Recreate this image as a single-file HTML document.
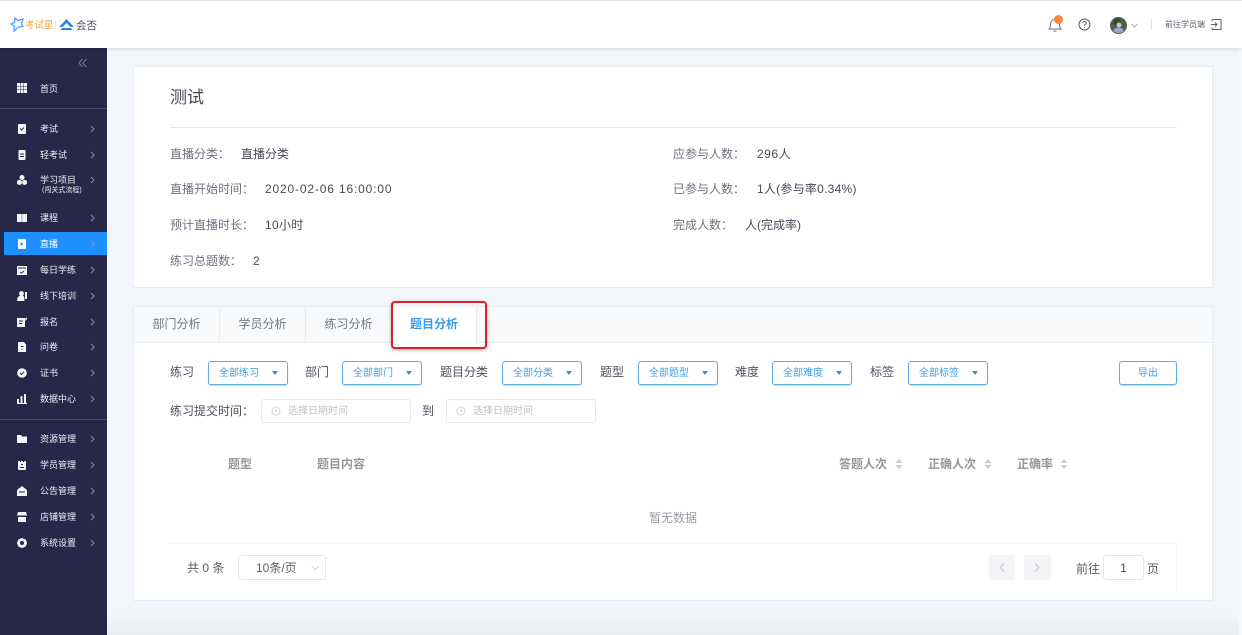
<!DOCTYPE html>
<html lang="zh"><head><meta charset="utf-8"><title>题目分析</title>
<style>
*{box-sizing:border-box;margin:0;padding:0}
html,body{width:1242px;height:635px;overflow:hidden;background:#f2f5f9}
html{background:#f2f5f9}
body{position:relative;font-family:"Liberation Sans","Noto Sans CJK SC",sans-serif;font-size:12px;color:#5d6170;filter:blur(.35px)}
.a{position:absolute;white-space:nowrap;line-height:16px}
#bg{position:absolute;left:107px;top:600px;width:1135px;height:35px;background:linear-gradient(#f2f5f9,#f2f5f9 40%,#eceef1)}
#rs{position:absolute;left:1239px;top:48px;width:3px;height:587px;background:#f7f8fa}
#top{position:absolute;left:0;top:1px;width:1242px;height:47px;background:#fff;box-shadow:0 1px 4px rgba(0,0,0,.12)}
#strip{position:absolute;left:0;top:0;width:1242px;height:1px;background:#e6e6e6}
#side{position:absolute;left:0;top:48px;width:107px;height:587px;background:#27274a}
.m{position:absolute;left:40px;font-size:9px;line-height:12px;color:#eeeef5;white-space:nowrap}
.ic{position:absolute;left:17px;width:10px;height:10px}
.ch{position:absolute;left:90px;width:5px;height:8px}
.d{position:absolute;left:0;width:107px;height:1px;background:#44446a}
.card{position:absolute;background:#fff;border:1px solid #e6ebf0}
.l{color:#6f7380}.v{color:#474b58}
.sel{position:absolute;top:361px;height:24px;width:80px;border:1px solid #5eaee6;border-radius:3px;background:#fff;color:#3f9eea;font-size:10px;line-height:24px;padding-left:10px;box-shadow:0 1px 1px rgba(60,120,170,.25)}
.sel i{position:absolute;right:9px;top:9px;width:0;height:0;border:3.500px solid transparent;border-top:4px solid #2a8fdc;border-bottom:0}
.f{font-size:12px;color:#4e5162}
.dt{position:absolute;top:399px;width:150px;height:24px;border:1px solid #e6e8ec;border-radius:3px;background:#fff;color:#bcbfc7;font-size:10px;line-height:24px;padding-left:26px}
.dt svg{position:absolute;left:9px;top:6px}
.th{font-size:12px;color:#94979f;font-weight:bold}
.sort{position:absolute;width:8px;height:10px}
.tab{position:absolute;top:307px;height:36px;border-right:1px solid #e6ebf0;color:#747782;line-height:35px;text-align:center}
</style></head><body>
<div id="bg"></div><div id="rs"></div>
<div id="strip"></div>
<div id="side">
<svg style="position:absolute;left:78px;top:10px" width="9" height="10" viewBox="0 0 9 10" fill="none" stroke="#77779a"><path d="M4.500 1L.8 5l3.700 4M8.500 1L4.800 5l3.700 4"/></svg>
<div class="d" style="top:60px"></div>
<div class="d" style="top:371px"></div>
<div style="position:absolute;left:4px;top:184px;width:103px;height:23px;background:#1e90ff"></div>
</div>

<div id="top"></div>
<svg class="a" style="left:10px;top:17px" width="14" height="15" viewBox="0 0 14 15" fill="none" stroke="#4da3f5" stroke-width="1.300"><path d="M5 1l3 2.500L13 2l-1.500 5L13 9.500 8.500 10 4 14l.5-4.500L1 7l3.500-1.500z"/></svg>
<div class="a" style="left:25px;top:18px;font-size:9.500px;color:#f5a54a">考试星</div>
<div class="a" style="left:55px;top:20px;width:1px;height:11px;background:#ececec"></div>
<svg class="a" style="left:59px;top:19px" width="15" height="12" viewBox="0 0 15 12"><path d="M7.500 0L15 8H11.500L7.500 4 3.500 8H0z" fill="#2a8ae6"/><path d="M3 9h9l1.500 2H1.500z" fill="#2a8ae6"/></svg>
<div class="a" style="left:76px;top:18px;font-size:10.500px;color:#444a58">会否</div>

<svg class="a" style="left:1047px;top:16px" width="16" height="17" viewBox="0 0 16 17" fill="none" stroke="#6a6e78"><path d="M2 13c1.500-1 1.500-3 1.500-5a4.500 4.500 0 0 1 9 0c0 2 0 4 1.500 5z"/><path d="M6.500 15h3"/></svg>
<div class="a" style="left:1054px;top:15px;width:9px;height:9px;border-radius:50%;background:#f58a3c"></div>
<svg class="a" style="left:1078px;top:18px" width="13" height="13" viewBox="0 0 13 13" fill="none" stroke="#555a66"><circle cx="6.500" cy="6.500" r="5.500"/><path d="M4.800 5a1.700 1.700 0 1 1 2.500 1.500c-.6.3-.8.6-.8 1.200M6.500 9.300v.7"/></svg>
<svg class="a" style="left:1110px;top:17px" width="17" height="17" viewBox="0 0 17 17"><circle cx="8.500" cy="8.500" r="8.500" fill="#4d5f4e"/><circle cx="7" cy="5" r="4" fill="#38483a"/><path d="M3 14c1-4 9-5 11 0a8.500 8.500 0 0 1-11 0z" fill="#9ca6c8"/><circle cx="9" cy="8" r="2.500" fill="#c8c6b8"/></svg>
<svg class="a" style="left:1131px;top:23px" width="7" height="5" viewBox="0 0 7 5" fill="none" stroke="#aab0ba"><path d="M.5 1l3 3 3-3"/></svg>
<div class="a" style="left:1151px;top:19px;width:1px;height:11px;background:#dfe2e6"></div>
<div class="a" style="left:1165px;top:17px;font-size:8px;color:#55606f">前往学员端</div>
<svg class="a" style="left:1211px;top:19px" width="11" height="11" viewBox="0 0 11 11" fill="none" stroke="#59606c"><path d="M1 .5h9v10H1M0 5.500h6M4 3.500l2 2-2 2M1 .5v2M1 8.500v2"/></svg>

<div class="m" style="top:83px">首页</div>
<svg class="ic" style="top:83px" viewBox="0 0 10 10" fill="#f4f4f9"><path d="M0 0h3v3H0zM3.500 0h3v3h-3zM7 0h3v3H7zM0 3.500h3v3H0zM3.500 3.500h3v3h-3zM7 3.500h3v3H7zM0 7h3v3H0zM3.500 7h3v3h-3zM7 7h3v3H7z"/></svg>
<div class="m" style="top:123px">考试</div>
<svg class="ic" style="top:124px" viewBox="0 0 10 10"><rect x="1" y="0" width="8" height="10" rx="1" fill="#f4f4f9"/><path d="M3 4.500l1.500 1.500L7 3.500" stroke="#27274a" fill="none"/></svg>
<div class="m" style="top:149px">轻考试</div>
<svg class="ic" style="top:150px" viewBox="0 0 10 10"><rect x="1.500" y="0" width="7" height="10" rx="1" fill="#f4f4f9"/><path d="M3 4h4M3 6.500h4" stroke="#27274a"/></svg>
<div class="m" style="top:174px">学习项目</div>
<div class="m" style="top:186px;left:42px;font-size:7px;line-height:9px">(闯关式流程)</div>
<svg class="ic" style="top:175px" viewBox="0 0 10 10" fill="#f4f4f9"><circle cx="5" cy="2.500" r="2.500"/><circle cx="2.400" cy="7.300" r="2.600"/><circle cx="7.600" cy="7.300" r="2.600"/></svg>
<div class="m" style="top:212px">课程</div>
<svg class="ic" style="top:213px" viewBox="0 0 10 10"><path d="M0 1h4.800v8H0zM5.200 1H10v8H5.200z" fill="#f4f4f9"/></svg>
<div class="m" style="top:238px;color:#fff">直播</div>
<svg class="ic" style="top:239px" viewBox="0 0 10 10"><rect x="1" y="0" width="8" height="10" rx="1" fill="#fff"/><path d="M3.500 3v4l3-2z" fill="#1e90ff"/></svg>
<div class="m" style="top:264px">每日学练</div>
<svg class="ic" style="top:265px" viewBox="0 0 10 10"><rect x="0" y="1" width="10" height="9" fill="#f4f4f9"/><path d="M1 3h8M3 7l1.500 1L7 6" stroke="#27274a" fill="none"/></svg>
<div class="m" style="top:290px">线下培训</div>
<svg class="ic" style="top:291px" viewBox="0 0 10 10" fill="#f4f4f9"><circle cx="4.500" cy="2.500" r="2.400"/><path d="M0 10c0-4 2-5.500 4.500-5.500S7.500 6 7.500 10zM8 1h2v7H8z"/></svg>
<div class="m" style="top:316px">报名</div>
<svg class="ic" style="top:317px" viewBox="0 0 10 10"><path d="M0 1h8v9H0z" fill="#f4f4f9"/><path d="M2 4h4M2 6.500h3" stroke="#27274a"/><path d="M6 5l4-4" stroke="#f4f4f9" stroke-width="1.500"/></svg>
<div class="m" style="top:341px">问卷</div>
<svg class="ic" style="top:342px" viewBox="0 0 10 10"><path d="M1 0h6l2 2.500V10H1z" fill="#f4f4f9"/><path d="M4 4.500h2.500M5 6.500v1" stroke="#27274a"/></svg>
<div class="m" style="top:367px">证书</div>
<svg class="ic" style="top:368px" viewBox="0 0 10 10"><circle cx="5" cy="5" r="4.800" fill="#f4f4f9"/><path d="M3 5l1.500 1.500L7 3.800" stroke="#27274a" fill="none"/></svg>
<div class="m" style="top:393px">数据中心</div>
<svg class="ic" style="top:394px" viewBox="0 0 10 10" fill="#f4f4f9"><path d="M0 5h2v4H0zM3.500 2h2v7h-2zM7 0h2v9H7zM0 9h10v1H0z"/></svg>
<div class="m" style="top:433px">资源管理</div>
<svg class="ic" style="top:434px" viewBox="0 0 10 10" fill="#f4f4f9"><path d="M0 1h4l1 1.500h5V9H0z"/></svg>
<div class="m" style="top:459px">学员管理</div>
<svg class="ic" style="top:460px" viewBox="0 0 10 10"><rect x="1" y="1" width="8" height="9" rx="1" fill="#f4f4f9"/><path d="M3.500 0v2M6.500 0v2M3 7.500h4M4 4.500h2" stroke="#27274a"/></svg>
<div class="m" style="top:485px">公告管理</div>
<svg class="ic" style="top:486px" viewBox="0 0 10 10"><path d="M0 4l5-4 5 4v6H0z" fill="#f4f4f9"/><path d="M2 6h6" stroke="#27274a"/></svg>
<div class="m" style="top:511px">店铺管理</div>
<svg class="ic" style="top:512px" viewBox="0 0 10 10" fill="#f4f4f9"><path d="M1 0h8l1 3.500H0zM1 5h8v5H1z"/></svg>
<div class="m" style="top:537px">系统设置</div>
<svg class="ic" style="top:538px" viewBox="0 0 10 10"><circle cx="5" cy="5" r="3.400" fill="none" stroke="#f4f4f9" stroke-width="2.800"/><path d="M5 0v2M5 8v2M0 5h2M8 5h2M1.500 1.500l1.500 1.500M7 7l1.500 1.500M8.500 1.500L7 3M3 7L1.500 8.500" stroke="#f4f4f9" stroke-width="1.200"/></svg>

<svg width="0" height="0" style="position:absolute"><defs><symbol id="c" viewBox="0 0 5 8"><path d="M1 1L4 4 1 7" fill="none" stroke="#8f8fac" stroke-width=".9"/></symbol></defs></svg>
<svg class="ch" style="top:125px"><use href="#c"/></svg>
<svg class="ch" style="top:151px"><use href="#c"/></svg>
<svg class="ch" style="top:176px"><use href="#c"/></svg>
<svg class="ch" style="top:214px"><use href="#c"/></svg>
<svg class="ch" style="top:240px"><use href="#c"/></svg>
<svg class="ch" style="top:266px"><use href="#c"/></svg>
<svg class="ch" style="top:292px"><use href="#c"/></svg>
<svg class="ch" style="top:318px"><use href="#c"/></svg>
<svg class="ch" style="top:343px"><use href="#c"/></svg>
<svg class="ch" style="top:369px"><use href="#c"/></svg>
<svg class="ch" style="top:395px"><use href="#c"/></svg>
<svg class="ch" style="top:435px"><use href="#c"/></svg>
<svg class="ch" style="top:461px"><use href="#c"/></svg>
<svg class="ch" style="top:487px"><use href="#c"/></svg>
<svg class="ch" style="top:513px"><use href="#c"/></svg>
<svg class="ch" style="top:539px"><use href="#c"/></svg>

<div class="card" style="left:133px;top:66px;width:1080px;height:222px"></div>
<div class="a" style="left:170px;top:88px;font-size:17px;line-height:20px;color:#454854">测试</div>
<div class="a" style="left:170px;top:127px;width:1007px;height:1px;background:#e6e8ec"></div>
<div class="a l" style="left:170px;top:146px">直播分类：</div><div class="a v" style="left:241px;top:146px">直播分类</div>
<div class="a l" style="left:170px;top:181px">直播开始时间：</div><div class="a v" style="left:265px;top:181px;letter-spacing:.84px">2020-02-06 16:00:00</div>
<div class="a l" style="left:170px;top:217px">预计直播时长：</div><div class="a v" style="left:265px;top:217px;letter-spacing:.3px">10小时</div>
<div class="a l" style="left:170px;top:253px">练习总题数：</div><div class="a v" style="left:253px;top:253px">2</div>
<div class="a l" style="left:673px;top:146px">应参与人数：</div><div class="a v" style="left:757px;top:146px;letter-spacing:.5px">296人</div>
<div class="a l" style="left:673px;top:181px">已参与人数：</div><div class="a v" style="left:757px;top:181px;letter-spacing:.25px">1人(参与率0.34%)</div>
<div class="a l" style="left:673px;top:217px">完成人数：</div><div class="a v" style="left:745px;top:217px">人(完成率)</div>

<div class="card" style="left:133px;top:306px;width:1080px;height:295px"></div>
<div class="a" style="left:134px;top:307px;width:1078px;height:36px;background:#f7f9fb;border-bottom:1px solid #e6ebf0"></div>
<div class="tab" style="left:134px;width:86px">部门分析</div>
<div class="tab" style="left:220px;width:86px">学员分析</div>
<div class="tab" style="left:306px;width:86px">练习分析</div>
<div class="tab" style="left:392px;width:85px;height:37px;background:#fff;color:#3c9be8;font-weight:bold">题目分析</div>
<div class="a" style="left:391px;top:301px;width:96px;height:48px;border:2.500px solid #dd2128;border-radius:4px;box-shadow:0 1px 3px rgba(0,0,0,.35)"></div>

<div class="a f" style="left:170px;top:364px">练习</div><div class="sel" style="left:208px">全部练习<i></i></div>
<div class="a f" style="left:305px;top:364px">部门</div><div class="sel" style="left:342px">全部部门<i></i></div>
<div class="a f" style="left:440px;top:364px">题目分类</div><div class="sel" style="left:502px">全部分类<i></i></div>
<div class="a f" style="left:600px;top:364px">题型</div><div class="sel" style="left:638px">全部题型<i></i></div>
<div class="a f" style="left:735px;top:364px">难度</div><div class="sel" style="left:772px">全部难度<i></i></div>
<div class="a f" style="left:870px;top:364px">标签</div><div class="sel" style="left:908px">全部标签<i></i></div>
<div class="sel" style="left:1119px;width:58px;padding:0;text-align:center">导出</div>

<div class="a f" style="left:170px;top:403px">练习提交时间：</div>
<div class="dt" style="left:261px"><svg width="10" height="10" viewBox="0 0 10 10" fill="none" stroke="#cfd2d8"><circle cx="5" cy="5" r="4"/><path d="M5 2.500V5l1.500 1"/></svg>选择日期时间</div>
<div class="a f" style="left:422px;top:403px">到</div>
<div class="dt" style="left:446px"><svg width="10" height="10" viewBox="0 0 10 10" fill="none" stroke="#cfd2d8"><circle cx="5" cy="5" r="4"/><path d="M5 2.500V5l1.500 1"/></svg>选择日期时间</div>

<div class="a th" style="left:228px;top:456px">题型</div>
<div class="a th" style="left:317px;top:456px">题目内容</div>
<div class="a th" style="left:839px;top:456px">答题人次</div>
<div class="a th" style="left:928px;top:456px">正确人次</div>
<div class="a th" style="left:1017px;top:456px">正确率</div>
<svg class="sort" style="left:895px;top:459px" viewBox="0 0 8 10" fill="#c8cbd1"><path d="M4 0l3.500 4h-7zM4 10L.5 6h7z"/></svg>
<svg class="sort" style="left:984px;top:459px" viewBox="0 0 8 10" fill="#c8cbd1"><path d="M4 0l3.500 4h-7zM4 10L.5 6h7z"/></svg>
<svg class="sort" style="left:1060px;top:459px" viewBox="0 0 8 10" fill="#c8cbd1"><path d="M4 0l3.500 4h-7zM4 10L.5 6h7z"/></svg>
<div class="a" style="left:649px;top:510px;color:#9a9da6">暂无数据</div>

<div class="a" style="left:169px;top:543px;width:1008px;height:1px;background:#eef0f3"></div>
<div class="a" style="left:1176px;top:543px;width:1px;height:48px;background:#eef0f3"></div>
<div class="a" style="left:187px;top:560px;color:#5a5d67">共 0 条</div>
<div class="a" style="left:238px;top:555px;width:88px;height:25px;border:1px solid #e3e5ea;border-radius:3px;line-height:25px;padding-left:17px;color:#5a5d67">10条/页</div>
<svg class="a" style="left:311px;top:565px" width="9" height="6" viewBox="0 0 9 6" fill="none" stroke="#d3d6db"><path d="M1 1l3.500 3.500L8 1"/></svg>
<div class="a" style="left:989px;top:555px;width:26px;height:25px;background:#f3f4f6;border-radius:2px"></div>
<div class="a" style="left:1024px;top:555px;width:27px;height:25px;background:#f3f4f6;border-radius:2px"></div>
<svg class="a" style="left:999px;top:563px" width="6" height="9" viewBox="0 0 6 9" fill="none" stroke="#c5c8ce"><path d="M5 .5L1 4.500l4 4"/></svg>
<svg class="a" style="left:1034px;top:563px" width="6" height="9" viewBox="0 0 6 9" fill="none" stroke="#c5c8ce"><path d="M1 .5l4 4-4 4"/></svg>
<div class="a" style="left:1076px;top:561px;color:#5a5d67">前往</div>
<div class="a" style="left:1103px;top:555px;width:41px;height:25px;border:1px solid #e3e5ea;border-radius:4px;line-height:25px;text-align:center;color:#4e5158">1</div>
<div class="a" style="left:1147px;top:561px;color:#5a5d67">页</div>
</body></html>
